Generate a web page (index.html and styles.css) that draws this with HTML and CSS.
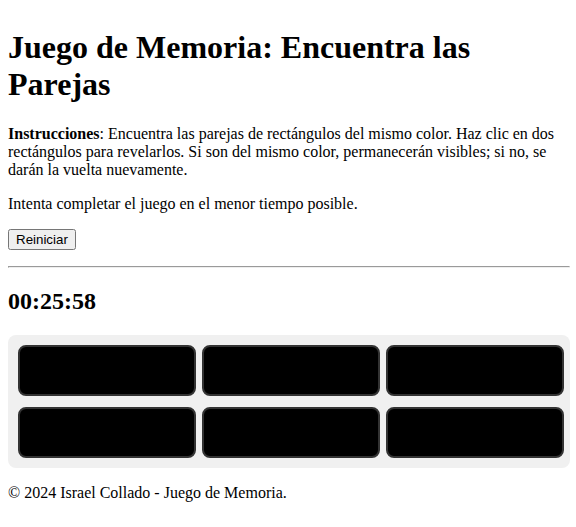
FILE: index.html
```html
<!DOCTYPE html>
<html lang="es">
<head>
<meta charset="utf-8">
<title>Juego de Memoria</title>
<link rel="stylesheet" href="styles.css">
</head>
<body class="page">
<h1 class="title">Juego de Memoria: Encuentra las Parejas</h1>
<p class="text"><strong>Instrucciones</strong>: Encuentra las parejas de rectángulos del mismo color. Haz clic en dos rectángulos para revelarlos. Si son del mismo color, permanecerán visibles; si no, se darán la vuelta nuevamente.</p>
<p class="text">Intenta completar el juego en el menor tiempo posible.</p>
<p class="text"><button class="reset-btn" type="button">Reiniciar</button></p>
<hr class="divider">
<h2 class="timer">00:25:58</h2>
<div class="board">
  <div class="card"></div>
  <div class="card"></div>
  <div class="card"></div>
  <div class="card"></div>
  <div class="card"></div>
  <div class="card"></div>
</div>
<footer class="footer">
  <p class="text">© 2024 Israel Collado - Juego de Memoria.</p>
</footer>
</body>
</html>
```
FILE: styles.css
```css
.page {
  margin: 8px 6px 8px 8px;
  font-family: "Liberation Serif", "Times New Roman", serif;
  font-size: 16px;
  color: #000;
  background: #fff;
}
.title {
  font-size: 32px;
  margin: 21.44px 0;
}
.text {
  margin: 16px 0;
}
.reset-btn {
  font-family: "Liberation Sans", Arial, sans-serif;
  font-size: 13.333px;
}
.divider {
  margin: 8px 0;
}
.timer {
  font-size: 24px;
  margin: 19.92px 0;
}
.board {
  display: grid;
  grid-template-columns: repeat(3, 178px);
  column-gap: 6px;
  row-gap: 11px;
  padding: 10px 6px 10px 10px;
  background: #f0f0f0;
  border-radius: 8px;
}
.card {
  height: 47px;
  background: #000;
  border: 2px solid #333;
  border-radius: 8px;
}
.footer {
  margin-top: 16px;
}
```
